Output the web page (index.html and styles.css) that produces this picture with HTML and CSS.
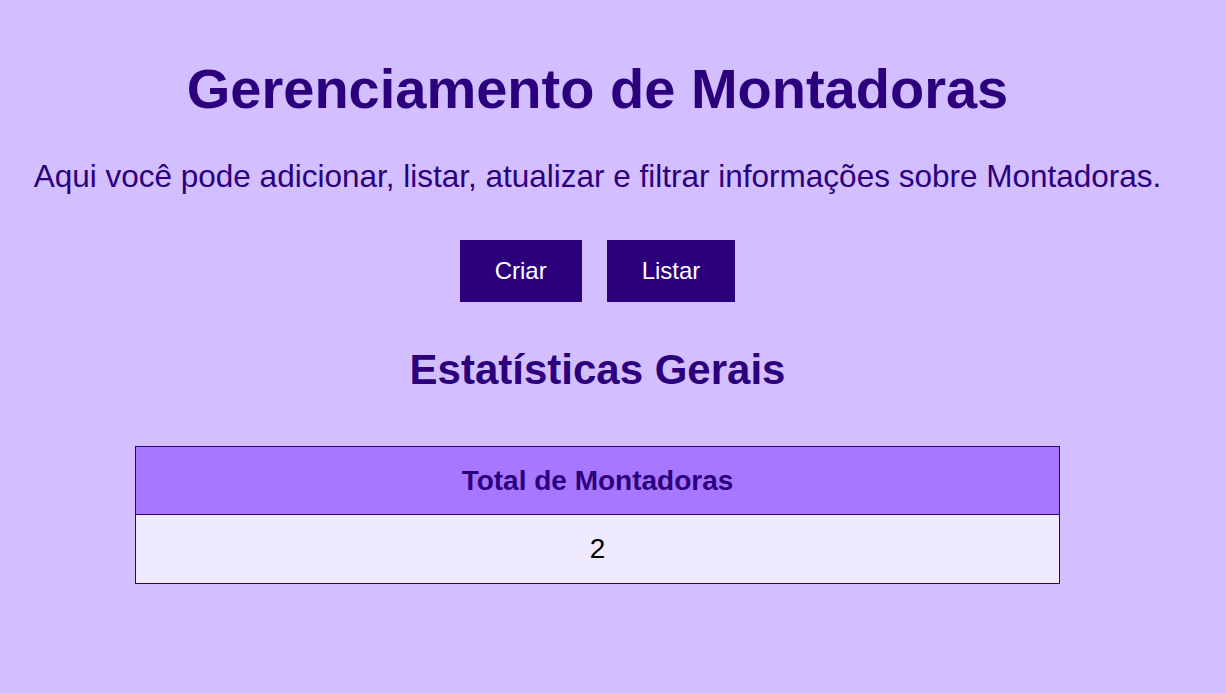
FILE: index.html
```html
<!DOCTYPE html>
<html lang="pt-BR">
<head>
<meta charset="utf-8">
<title>Gerenciamento de Montadoras</title>
<link rel="stylesheet" href="styles.css">
</head>
<body>
<main class="page">
  <h1 class="title">Gerenciamento de Montadoras</h1>
  <p class="subtitle">Aqui você pode adicionar, listar, atualizar e filtrar informações sobre Montadoras.</p>
  <div class="actions">
    <button class="btn">Criar</button>
    <button class="btn">Listar</button>
  </div>
  <h2 class="section-title">Estatísticas Gerais</h2>
  <table class="stats">
    <thead>
      <tr><th>Total de Montadoras</th></tr>
    </thead>
    <tbody>
      <tr><td>2</td></tr>
    </tbody>
  </table>
</main>
</body>
</html>
```
FILE: styles.css
```css
html, body {
  margin: 0;
  padding: 0;
}
body {
  background: #d3bfff;
  font-family: "Liberation Sans", Arial, sans-serif;
  color: #2c007d;
  min-height: 693px;
}
.page {
  width: 1195px;
  display: flex;
  flex-direction: column;
  align-items: center;
  padding-top: 57px;
}
.title {
  margin: 0;
  font-size: 56px;
  font-weight: bold;
  line-height: 64px;
}
.subtitle {
  margin: 37px 0 0;
  font-size: 31.5px;
  line-height: 36px;
}
.actions {
  display: flex;
  gap: 25px;
  margin-top: 46px;
}
.btn {
  background: #2c007d;
  color: #fff;
  border: none;
  font-family: inherit;
  font-size: 24px;
  padding: 17px 35px;
  line-height: 28px;
}
.section-title {
  margin: 44px 0 0;
  font-size: 42px;
  line-height: 48px;
  font-weight: bold;
}
.stats {
  margin-top: 52px;
  width: 925px;
  border-collapse: collapse;
  text-align: center;
}
.stats th, .stats td {
  border: 1px solid #2c007d;
  padding: 0;
  font-size: 28px;
}
.stats th {
  height: 67px;
  background: #a877ff;
  font-weight: bold;
}
.stats td {
  height: 68px;
  background: #efeafd;
  color: #000;
}
```
